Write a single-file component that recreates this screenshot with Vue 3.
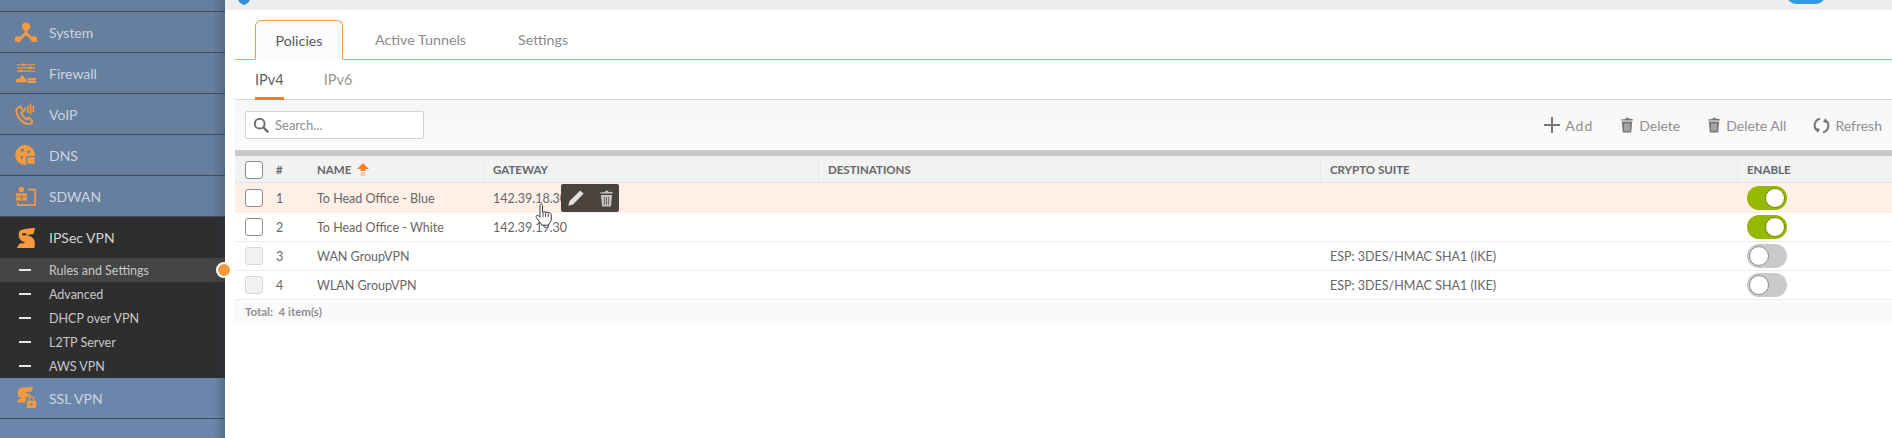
<template>
  <div class="page">
    <aside class="sidebar">
      <div class="side-top"></div>
      <div class="side-item" v-for="item in topItems" :key="item.label">
        <svg class="side-icon" viewBox="0 0 24 24" v-html="item.icon"></svg>
        <span>{{ item.label }}</span>
      </div>
      <div class="side-group">
        <div class="side-item side-item--open">
          <svg class="side-icon" viewBox="0 0 24 24" v-html="sIcon"></svg>
          <span>IPSec VPN</span>
        </div>
        <div
          class="sub-item"
          v-for="(sub, i) in subItems"
          :key="sub"
          :class="{ active: i === 0 }"
        >
          <i class="dash"></i>
          <span>{{ sub }}</span>
        </div>
      </div>
      <div class="side-item side-item--ssl">
        <svg class="side-icon" viewBox="0 0 24 24" v-html="sslIcon"></svg>
        <span>SSL VPN</span>
      </div>
      <div class="side-rest"></div>
      <b class="active-dot"></b>
    </aside>

    <main class="main">
      <div class="topbar">
        <svg class="shield" viewBox="0 0 14 6"><path d="M0 0h14C13 3 10 5 7 6 4 5 1 3 0 0z" /></svg>
        <i class="top-toggle"></i>
      </div>

      <div class="tabs">
        <div class="tab tab--active">Policies</div>
        <div class="tab">Active Tunnels</div>
        <div class="tab">Settings</div>
      </div>

      <div class="subtabs">
        <div class="subtab subtab--active">IPv4</div>
        <div class="subtab">IPv6</div>
      </div>

      <div class="toolbar">
        <div class="search">
          <svg viewBox="0 0 16 16" width="16" height="16">
            <circle cx="6.7" cy="6.7" r="4.9" fill="none" stroke="#6f6f73" stroke-width="2" />
            <path d="M10.4 10.4 14.6 14.6" stroke="#6f6f73" stroke-width="2.4" stroke-linecap="round" />
          </svg>
          <span>Search...</span>
        </div>
        <div class="actions">
          <div class="action">
            <svg viewBox="0 0 16 16" width="16" height="16">
              <path d="M8 0v16M0 8h16" stroke="#77777a" stroke-width="2" />
            </svg>
            <span class="add-label">Add</span>
          </div>
          <div class="action">
            <svg viewBox="0 0 14 16" width="14" height="16" v-html="trashIcon"></svg>
            Delete
          </div>
          <div class="action">
            <svg viewBox="0 0 14 16" width="14" height="16" v-html="trashIcon"></svg>
            Delete All
          </div>
          <div class="action">
            <svg viewBox="0 0 18 18" width="17" height="17">
              <path d="M7.4 1.8A7.2 7.2 0 0 0 4.4 14.4M10.6 16.2a7.2 7.2 0 0 0 3-12.6" fill="none" stroke="#77777a" stroke-width="2.2" />
              <path d="M2.4 11.4 7.4 12.6 5 17zM15.6 6.600 10.600 5.400 13 1z" fill="#77777a" />
            </svg>
            Refresh
          </div>
        </div>
      </div>

      <div class="table">
        <div class="thead row-grid">
          <div class="cell"><i class="check"></i></div>
          <div class="cell">#</div>
          <div class="cell">
            NAME
            <svg class="sort" viewBox="0 0 12 14" width="12" height="14">
              <path d="M6 0 12 6H8.4v2H3.6V6H0z" fill="#f5822a" />
              <path d="M3.6 9.4h4.8v1.2H3.6zM3.6 11.6h4.8v1H3.6z" fill="#f5a26a" />
            </svg>
          </div>
          <div class="cell cell--pad">GATEWAY</div>
          <div class="cell cell--pad">DESTINATIONS</div>
          <div class="cell cell--pad">CRYPTO SUITE</div>
          <div class="cell cell--pad">ENABLE</div>
        </div>

        <div
          class="row row-grid"
          v-for="(row, i) in rows"
          :key="row.id"
          :class="{ hovered: i === 0 }"
        >
          <div class="cell"><i class="check" :class="{ disabled: !row.gateway }"></i></div>
          <div class="cell">{{ row.id }}</div>
          <div class="cell">{{ row.name }}</div>
          <div class="cell cell--pad">{{ row.gateway }}</div>
          <div class="cell cell--pad"></div>
          <div class="cell cell--pad">{{ row.crypto }}</div>
          <div class="cell cell--pad">
            <i class="toggle" :class="{ on: row.enabled }"></i>
          </div>
          <div class="row-tools" v-if="i === 0">
            <svg viewBox="0 0 18 18" width="18" height="18">
              <path d="M13.2 1.4 16.6 4.8 6 15.4 1.2 16.8 2.6 12z" fill="#e4e0dc" />
            </svg>
            <svg viewBox="0 0 14 16" width="15" height="17">
              <path d="M1 3.4h12l-.2-1.2L8.6 1.6 8 .4 5.600.9l.2 1L1 2.400zM1.800 4.600h10.400L11.200 15.600H2.800z" fill="#c9c6c2" />
              <path d="M5 6.500v7.400M7 6.500v7.400M9 6.500v7.400" stroke="#4a423c" stroke-width=".7" />
            </svg>
          </div>
          <svg class="cursor" v-if="i === 0" viewBox="0 0 18 24" width="18" height="24">
            <path
              d="M6 1.2c1 0 1.500.7 1.500 1.600v6.400c1.600-.5 5.600.1 7.200.7 1.200.5 1.600 1.300 1.600 2.400v3.600c0 1.600-.6 2.600-1.400 3.700l-1 1.400c-.3.4-.4.8-.4 1.200H6.800c-.2-1-1-1.800-2-3L1.600 15c-.7-.9-.6-1.800 0-2.400.7-.6 1.500-.4 2.200.3l1.200 1.300V2.800C5 1.900 5.200 1.200 6 1.200z"
              fill="#fff"
              stroke="#222"
              stroke-width=".9"
            />
            <path d="M8 9.600V14M10.600 10v4M13.200 10.400V14" stroke="#222" stroke-width=".8" fill="none" />
          </svg>
        </div>

        <div class="total">Total: &nbsp;4 item(s)</div>
      </div>
    </main>
  </div>
</template>

<script setup>
const o = 'fill="#f59a3f"'
const oLine = 'fill="none" stroke="#f59a3f"'

const sIcon = `<path ${o} d="M5 4Q12 1 22 1L20 8Q15 8 13 9Q18 10 20.500 13Q22.500 17 21 23L2 23L5 18Q10 18 11 17Q5 15 4 10Q4 6 5 4z"/><ellipse cx="10" cy="8" rx="2.400" ry="1.300" fill="#2e2e2e"/>`
const sslIcon = `<path ${o} d="M5 1Q11 0 20 0L18 5Q13 5 11 6Q15 7 18 9L13 11Q11 13 11 17H2L4 13H8Q3 11 3 7Q3 3 5 1z"/><rect x="13" y="15" width="10" height="8" rx="1" ${o}/><path d="M15.500 15v-2a2.500 2.500 0 0 1 5 0v2" ${oLine} stroke-width="1.300"/><circle cx="18" cy="19" r="1.300" fill="#667f9f"/>`

const topItems = [
  {
    label: 'System',
    icon: `<circle cx="12" cy="6" r="4.500" ${o}/><path d="M12 9v5M12 13l-6 6M12 13l6 6" ${oLine} stroke-width="3"/><path ${o} d="M0 18l4-2 3 4-1.500 3H0zM24 18l-4-2-3 4 1.500 3H24z"/>`,
  },
  {
    label: 'Firewall',
    icon: `<path d="M2 3h20M2 6.500h20M2 10h20" ${oLine} stroke-width="1.300"/><path ${o} d="M8 1.500h3V4H8zM15 5h3v2.500h-3zM5 8.500h3V11H5z"/><path ${o} d="M1 22v-3l4-1 3-4 3 4 2 1v3zM14 17.500h9V20h-9zM14 20.500h9V23h-9z"/>`,
  },
  {
    label: 'VoIP',
    icon: `<path d="M3 5c-3 3-1 8 2 12s7 6 10 6c3 0 4-2 4-3l-4-4-2 2c-2-1-5-4-6-7l2-2-3-5z" ${oLine} stroke-width="2"/><path d="M14 3v8M17 .5v12M20 3v7M11 5v4" ${oLine} stroke-width="1.800"/>`,
  },
  {
    label: 'DNS',
    icon: `<circle cx="11" cy="12" r="10.800" ${o}/><path fill="#667f9f" d="M6 6l3-1 1 2-3 2zM13 8l3-1 1 2-3 2zM7 13l2 1-1 3-2-2z"/><rect x="12" y="13" width="11" height="10" rx="2" fill="#667f9f"/><rect x="13.500" y="14.500" width="8" height="7" rx="1" ${o}/>`,
  },
  {
    label: 'SDWAN',
    icon: `<path d="M14 5h8v17H3v-3" ${oLine} stroke-width="1.800"/><circle cx="7" cy="5" r="3" ${o}/><path ${o} d="M1 9h12v8H1z"/><path d="M7 9v8M1 13h12" stroke="#667f9f" stroke-width=".9"/>`,
  },
]

const subItems = ['Rules and Settings', 'Advanced', 'DHCP over VPN', 'L2TP Server', 'AWS VPN']

const trashIcon = `<path d="M1 3.400h12l-.2-1.200L8.600 1.600 8 .4 5.600.9l.2 1L1 2.400zM1.800 4.600h10.400L11.200 15.600H2.800z" fill="#77777a"/><path d="M5 6.500v7.400M7 6.500v7.400M9 6.500v7.400" stroke="#f8f8f8" stroke-width=".7"/>`

const rows = [
  { id: 1, name: 'To Head Office - Blue', gateway: '142.39.18.30', crypto: '', enabled: true },
  { id: 2, name: 'To Head Office - White', gateway: '142.39.19.30', crypto: '', enabled: true },
  { id: 3, name: 'WAN GroupVPN', gateway: '', crypto: 'ESP: 3DES/HMAC SHA1 (IKE)', enabled: false },
  { id: 4, name: 'WLAN GroupVPN', gateway: '', crypto: 'ESP: 3DES/HMAC SHA1 (IKE)', enabled: false },
]
</script>

<style>
html,
body {
  margin: 0;
  background: #fff;
  overflow: hidden;
}
</style>

<style scoped>
.page {
  display: flex;
  width: 1892px;
  height: 438px;
  overflow: hidden;
  font-family: Lato, "Open Sans", sans-serif;
  color: #5f5f62;
}

/* sidebar */
.sidebar {
  position: relative;
  flex: 0 0 225px;
  display: flex;
  flex-direction: column;
  background: #667f9f;
}
.sidebar::after {
  content: "";
  position: absolute;
  top: 0;
  right: 0;
  bottom: 0;
  width: 12px;
  background: linear-gradient(to right, rgba(40, 50, 65, 0), rgba(40, 50, 65, 0.28));
  pointer-events: none;
}
.side-top {
  height: 11px;
  border-bottom: 1px solid #3f4c5e;
}
.side-item {
  display: flex;
  align-items: center;
  height: 40px;
  border-bottom: 1px solid #3f4c5e;
  font-size: 14px;
  color: #cbd4df;
}
.side-icon {
  width: 22px;
  height: 22px;
  margin: 0 12px 0 15px;
  flex: none;
}
.side-group {
  background: #2e2e2e;
}
.side-item--open {
  height: 41px;
  border-bottom: 0;
  color: #d2d2d2;
}
.side-item--ssl {
  background: #6a87ab;
}
.sub-item {
  display: flex;
  align-items: center;
  height: 24px;
  font-size: 12.5px;
  color: #c8c8c8;
}
.sub-item.active {
  background: #454545;
}
.dash {
  width: 12px;
  height: 2px;
  margin: 0 18px 0 19px;
  background: #e8e8e8;
}
.side-rest {
  flex: 1;
  background: #6a87ab;
}
.active-dot {
  position: absolute;
  z-index: 2;
  top: 262px;
  left: 216px;
  width: 12px;
  height: 12px;
  border: 2px solid #fff;
  border-radius: 50%;
  background: #f59a3f;
}

/* main */
.main {
  flex: 1;
  min-width: 0;
  background: #fff;
}
.topbar {
  position: relative;
  height: 10px;
  background: #eeeeee;
}
.shield {
  position: absolute;
  top: 0;
  left: 12px;
  width: 14px;
  height: 5px;
  fill: #2f8fd8;
}
.top-toggle {
  position: absolute;
  top: -14px;
  left: 1562px;
  width: 38px;
  height: 18px;
  border-radius: 10px;
  background: #2f9be8;
}
.tabs {
  display: flex;
  height: 49px;
  margin-left: 10px;
  padding-left: 20px;
  border-bottom: 1px solid #ef9a4a;
}
.tab {
  display: flex;
  align-items: center;
  height: 39px;
  margin-top: 10px;
  padding: 0 26px;
  font-size: 14.3px;
  color: #8b8b8e;
}
.tab--active {
  justify-content: center;
  width: 88px;
  box-sizing: border-box;
  padding: 0;
  margin-right: 6px;
  height: 40px;
  border: 1px solid #ef9a4a;
  border-bottom: 1px solid #fff;
  border-radius: 6px 6px 0 0;
  background: #fbfbfb;
  color: #5a5a5d;
}
.subtabs {
  display: flex;
  gap: 40px;
  height: 39px;
  margin-left: 10px;
  padding-left: 20px;
  border-bottom: 1px solid #d6d6d6;
}
.subtab {
  position: relative;
  display: flex;
  align-items: center;
  font-size: 14.5px;
  color: #98989b;
}
.subtab--active {
  color: #5f5f62;
}
.subtab--active::after {
  content: "";
  position: absolute;
  left: 0;
  right: 0;
  bottom: -1px;
  height: 3px;
  background: #f47b20;
}
.toolbar {
  display: flex;
  align-items: center;
  justify-content: space-between;
  height: 50px;
  margin-left: 10px;
  padding: 0 10px;
  background: linear-gradient(to bottom, #f6f6f6, #fbfbfb);
}
.search {
  display: flex;
  align-items: center;
  gap: 6px;
  width: 179px;
  height: 28px;
  box-sizing: border-box;
  padding-left: 7px;
  border: 1px solid #d3d3d3;
  border-radius: 2px;
  background: #fff;
  font-size: 13px;
  color: #8d8d90;
}
.actions {
  display: flex;
  gap: 27px;
}
.action {
  display: flex;
  align-items: center;
  gap: 5px;
  font-size: 14px;
  color: #8f8f92;
}
.add-label {
  letter-spacing: 1px;
}

/* table */
.table {
  margin-left: 10px;
  border-top: 6px solid #c9c9c9;
  font-size: 12.5px;
}
.row-grid {
  display: grid;
  grid-template-columns: 41px 41px 166px 335px 502px 417px 1fr;
}
.cell {
  display: flex;
  align-items: center;
  min-width: 0;
  white-space: nowrap;
}
.cell:first-child {
  padding-left: 10px;
}
.cell--pad {
  padding-left: 10px;
}
.thead {
  height: 25px;
  padding-top: 1px;
  background: #f2f2f2;
  border-bottom: 1px solid #e4e4e4;
  font-size: 11.5px;
  font-weight: 700;
  color: #66666a;
}
.thead .cell--pad {
  box-shadow: inset 1px 0 0 #e8e8e8;
}
.sort {
  margin-left: 6px;
}
.row {
  position: relative;
  height: 28px;
  border-bottom: 1px solid #ececec;
  color: #66666a;
}
.row.hovered {
  height: 30px;
  border-bottom: 0;
  background: #fef0e6;
}
.check {
  display: block;
  width: 18px;
  height: 18px;
  box-sizing: border-box;
  border: 1px solid #8d8d90;
  border-radius: 3px;
  background: #fff;
}
.check.disabled {
  border-color: #d8d8d8;
  background: #f1f1f1;
}
.toggle {
  position: relative;
  display: block;
  width: 40px;
  height: 24px;
  border-radius: 12px;
  background: #cacaca;
}
.toggle::after {
  content: "";
  position: absolute;
  top: 2px;
  left: 2px;
  width: 20px;
  height: 20px;
  box-sizing: border-box;
  border: 1px solid #8c8c8c;
  border-radius: 50%;
  background: #fff;
}
.toggle.on {
  background: #97b800;
}
.toggle.on::after {
  left: 18px;
  border-color: #6f8a00;
}
.row-tools {
  position: absolute;
  top: 1px;
  left: 326px;
  display: flex;
  align-items: center;
  gap: 14px;
  width: 58px;
  height: 28px;
  box-sizing: border-box;
  padding-left: 6px;
  border-radius: 2px;
  background: #4a423c;
}
.cursor {
  position: absolute;
  z-index: 3;
  top: 20px;
  left: 300px;
}
.total {
  display: flex;
  align-items: center;
  height: 23px;
  padding-left: 10px;
  background: #fafafa;
  font-size: 11.5px;
  font-weight: 700;
  color: #8f8f92;
}
</style>
